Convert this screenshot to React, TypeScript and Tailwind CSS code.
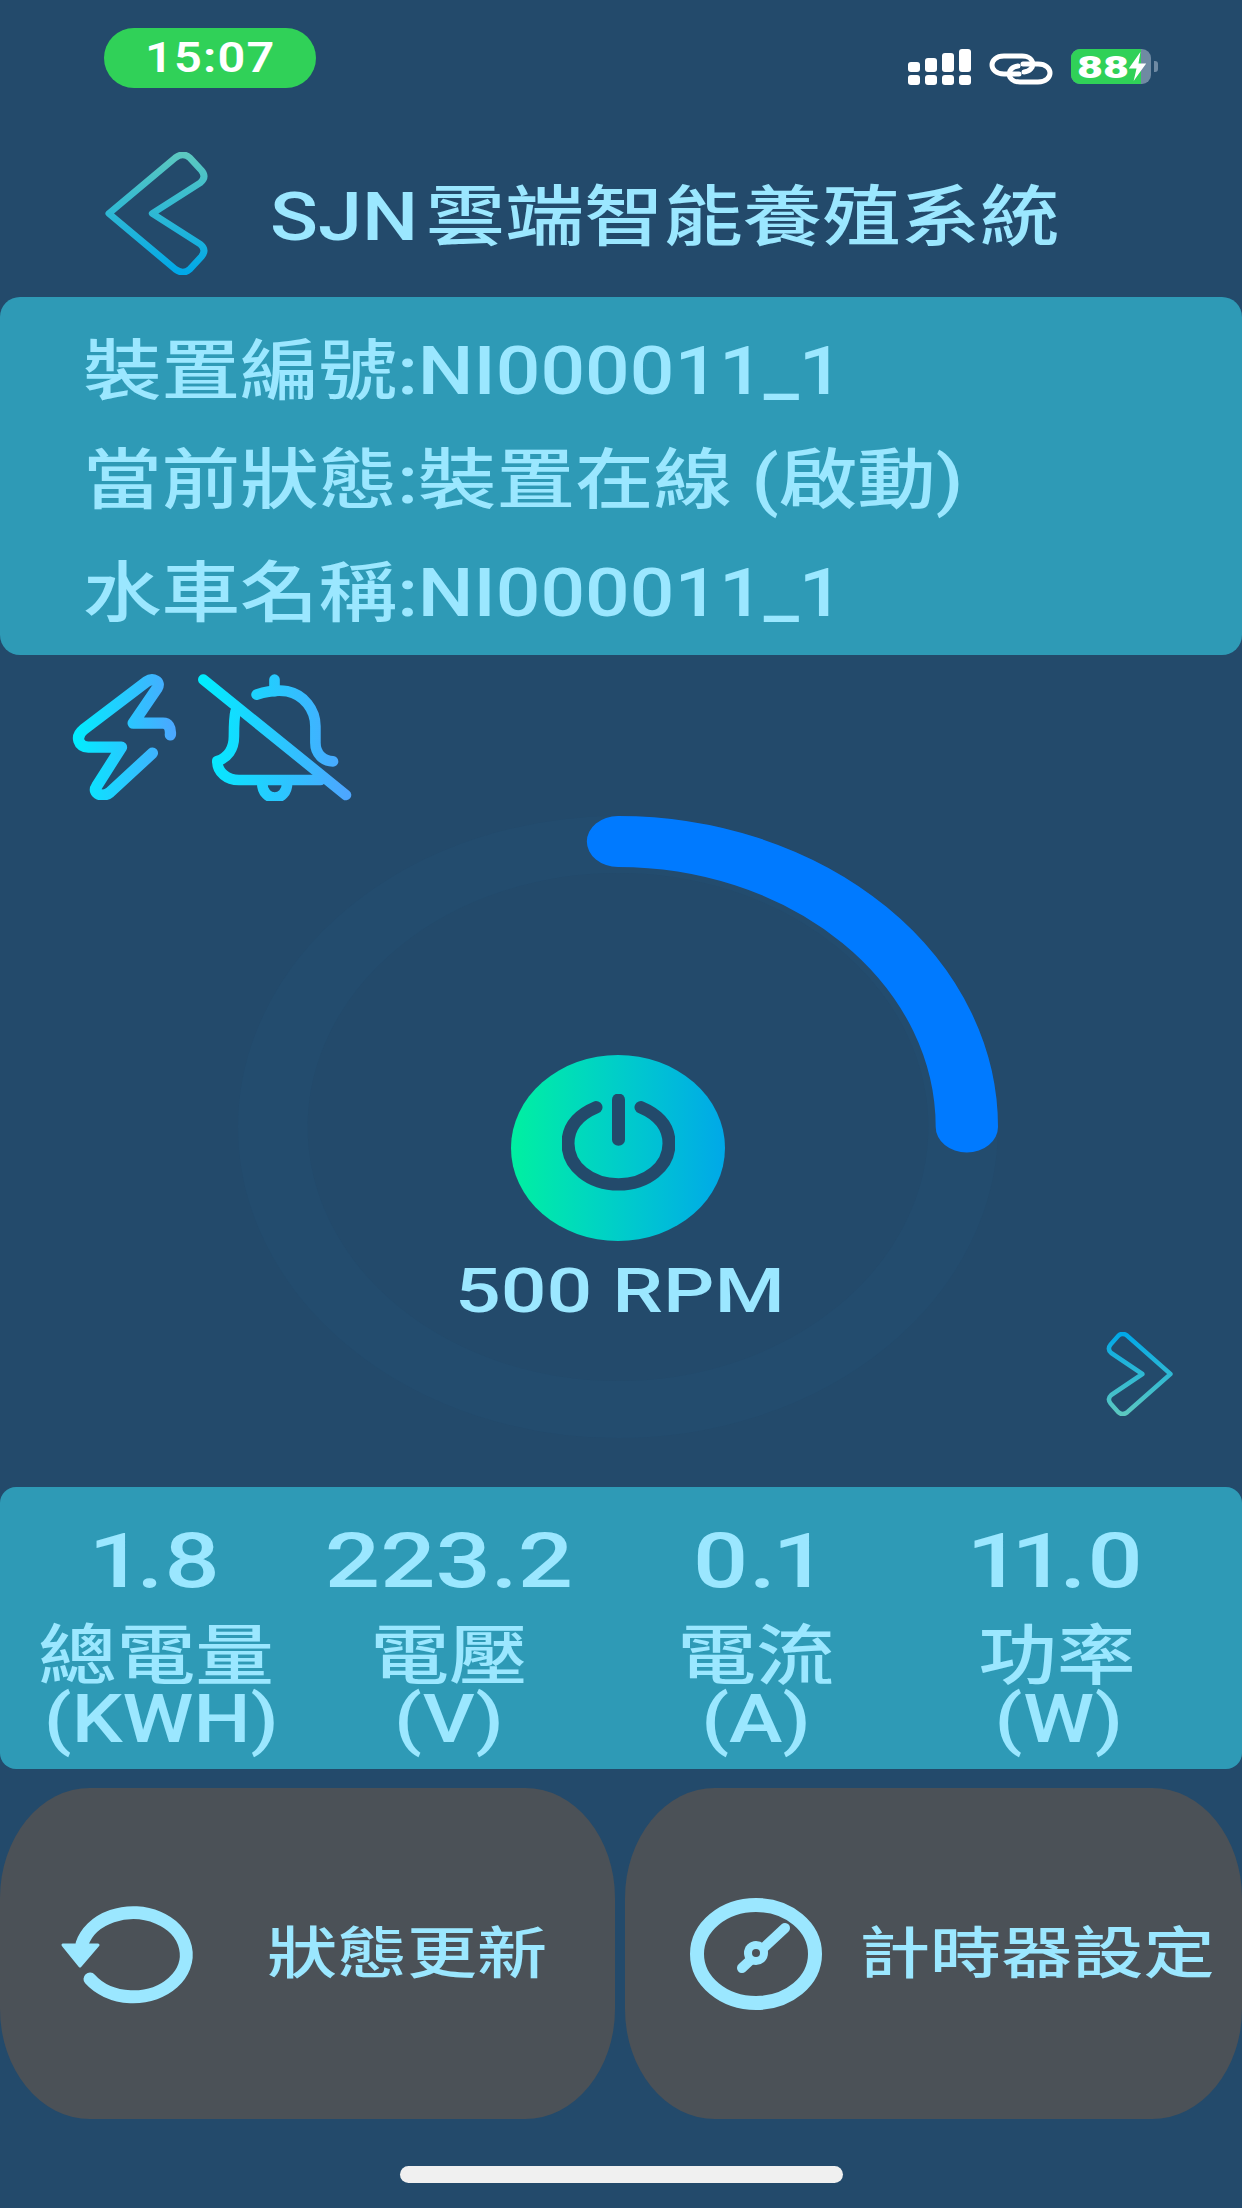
const font = 'font-["Roboto","Noto_Sans_CJK_TC",sans-serif]'

function BackChevron({ className }: { className: string }) {
  return (
    <svg viewBox="105 150 109 128" preserveAspectRatio="none" className={className} fill="none">
      <defs>
        <linearGradient id="chev" x1="0" y1="152" x2="0" y2="276" gradientUnits="userSpaceOnUse">
          <stop offset="0" stopColor="#5cc8c0" />
          <stop offset="1" stopColor="#00a8e8" />
        </linearGradient>
      </defs>
      <path
        d="M109 214 L178 156 Q186 150 193 156 L205 169 Q211 176 204 182 L154 214 L204 246 Q211 252 205 259 L193 272 Q186 278 178 272 Z"
        stroke="url(#chev)"
        strokeWidth="7"
        strokeLinejoin="round"
      />
    </svg>
  )
}

function SignalIcon() {
  const tops = ['h-[10px]', 'h-[14px]', 'h-[19px]', 'h-[23px]']
  return (
    <div className="flex gap-[5px] items-end">
      {tops.map((h) => (
        <div key={h} className="flex flex-col gap-[3px] items-center">
          <div className={`w-[12px] rounded-[3px] bg-white ${h}`} />
          <div className="w-[12px] h-[10px] rounded-[3px] bg-white" />
        </div>
      ))}
    </div>
  )
}

function LinkIcon() {
  return (
    <svg viewBox="0 0 64 32" className="w-[64px] h-[32px]" fill="none" stroke="#fff" strokeWidth="5" strokeLinecap="round">
      <path d="M30 21 H15 C-1 21 -1 3 15 3 H33 C47 3 47 18 35 19" />
      <path d="M34 11 H49 C65 11 65 29 49 29 H31 C17 29 17 14 29 13" />
    </svg>
  )
}

function Battery() {
  return (
    <div className="flex items-center">
      <div className="relative w-[80px] h-[35px] rounded-[9px] bg-[#6f8aa3] overflow-hidden">
        <div className="h-full w-[70px] bg-[#30d158] pl-[6px] flex items-center">
          <span className='text-white text-[32px] leading-none font-black font-["Roboto",sans-serif] origin-left scale-x-[1.4]'>88</span>
        </div>
        <svg viewBox="0 0 20 30" className="absolute right-[3px] top-[3px] w-[21px] h-[29px]" fill="#fff">
          <path d="M13 0 L1 17 H9 L6 30 L19 12 H11 Z" />
        </svg>
      </div>
      <div className="w-[4px] h-[11px] ml-[3px] rounded-r-[3px] bg-[#6f8aa3]" />
    </div>
  )
}

function BoltIcon() {
  return (
    <svg viewBox="210 100 340 380" className="w-[113px] h-[127px]" fill="none" strokeLinecap="round" strokeLinejoin="round">
      <defs>
        <linearGradient id="bolt" x1="220" y1="0" x2="530" y2="0" gradientUnits="userSpaceOnUse">
          <stop offset="0" stopColor="#00eeff" />
          <stop offset="1" stopColor="#4da6ff" />
        </linearGradient>
      </defs>
      <path
        d="M512 285 C514 262 505 250 490 250 L400 250 L472 145 C485 125 460 112 440 125 L250 270 C225 290 235 322 265 322 L365 322 L290 440 C275 462 310 475 330 458 L458 340"
        stroke="url(#bolt)"
        strokeWidth="34"
      />
    </svg>
  )
}

function BellOffIcon() {
  return (
    <svg viewBox="590 100 470 385" className="w-[157px] h-[128px]" fill="none" strokeLinecap="round" strokeLinejoin="round">
      <defs>
        <linearGradient id="bell" x1="600" y1="0" x2="1040" y2="0" gradientUnits="userSpaceOnUse">
          <stop offset="0" stopColor="#00eeff" />
          <stop offset="1" stopColor="#4da6ff" />
        </linearGradient>
      </defs>
      <g stroke="url(#bell)" strokeWidth="32">
        <path d="M608 120 L1037 467" />
        <path d="M822 120 V155" />
        <path d="M768 165 C800 155 830 150 860 155 C910 165 945 210 945 260 V310 C945 345 970 365 998 366" />
        <path d="M705 215 C700 235 700 260 700 290 C700 330 680 355 650 365 C650 400 680 422 715 422 L960 422" />
        <path d="M785 430 C785 490 860 490 860 430" />
      </g>
    </svg>
  )
}

function PowerIcon() {
  return (
    <svg viewBox="0 0 113 102" preserveAspectRatio="none" className="w-[113px] h-[97px] mb-[12px]" fill="none" stroke="#234a6b" strokeWidth="13" strokeLinecap="round">
      <path d="M56.500 6 V48" />
      <path d="M34 14 C16 22 6 35 6 52 C6 76 28 95 56.500 95 C85 95 107 76 107 52 C107 35 97 22 79 14" />
    </svg>
  )
}

function RefreshIcon() {
  return (
    <svg viewBox="55 1900 145 110" className="w-[145px] h-[110px]" fill="none">
      <path d="M82 1945 A53 42 0 1 1 90 1980" stroke="#9be7ff" strokeWidth="13" strokeLinecap="round" />
      <path d="M63 1946 H98 L80 1967 Z" fill="#9be7ff" stroke="#9be7ff" strokeWidth="3" strokeLinejoin="round" />
    </svg>
  )
}

function DialIcon() {
  return (
    <svg viewBox="685 1898 140 115" className="w-[140px] h-[115px]" fill="none">
      <ellipse cx="755" cy="1956" rx="59" ry="49" stroke="#9be7ff" strokeWidth="14" />
      <path d="M784 1930 L741 1970" stroke="#9be7ff" strokeWidth="10" strokeLinecap="round" />
      <ellipse cx="755" cy="1955" rx="12" ry="12" fill="#9be7ff" />
      <ellipse cx="755" cy="1955" rx="4" ry="4" fill="#4b5157" />
    </svg>
  )
}

const stats = [
  { value: '1.8', label: '總電量', unit: '(KWH)', unitClass: 'ml-[10px]' },
  { value: '223.2', label: '電壓', unit: '(V)', unitClass: '' },
  { value: '0.1', label: '電流', unit: '(A)', unitClass: '' },
  { value: '11.0', label: '功率', unit: '(W)', unitClass: 'ml-[3px]' },
]

export default function App() {
  return (
    <div className={`w-[1242px] h-[2208px] bg-[#234a6b] flex flex-col overflow-hidden text-[#9be7ff] ${font}`}>
      {/* Status bar */}
      <div className="h-[120px] flex justify-between pl-[104px] pr-[84px] pt-[28px]">
        <div className="w-[212px] h-[60px] rounded-[30px] bg-[#30d158] flex items-center justify-center">
          <span className="text-white text-[42px] leading-none font-semibold scale-x-[1.16] tracking-[1px]">15:07</span>
        </div>
        <div className="flex items-start gap-[18px] pt-[21px]">
          <SignalIcon />
          <div className="pt-[4px]"><LinkIcon /></div>
          <Battery />
        </div>
      </div>

      {/* Title */}
      <div className="h-[177px] flex items-center pl-[105px] pt-[10px]">
        <BackChevron className="w-[105px] h-[123px]" />
        <h1 className="ml-[60px] mt-[8px] text-[66px] leading-none font-medium [word-spacing:-10px] whitespace-nowrap origin-left scale-x-[1.2]">SJN 雲端智能養殖系統</h1>
      </div>

      {/* Device info */}
      <div className="h-[358px] rounded-[20px] bg-[#2e9ab6] pt-[20px] pl-[83px] text-[66px] font-medium">
        <p className="h-[109px] flex items-center whitespace-nowrap origin-left scale-x-[1.19]">裝置編號:NI000011_1</p>
        <p className="h-[109px] flex items-center whitespace-nowrap origin-left scale-x-[1.19]">當前狀態:裝置在線 (啟動)</p>
        <p className="h-[109px] mt-[4px] flex items-center whitespace-nowrap origin-left scale-x-[1.19]">水車名稱:NI000011_1</p>
      </div>

      {/* Alert icons */}
      <div className="h-[161px] flex items-start gap-[14px] pl-[70px] pt-[18px]">
        <BoltIcon />
        <BellOffIcon />
      </div>

      {/* Speed gauge */}
      <div className="h-[671px] relative flex justify-center pr-[6px]">
        <div className="relative w-[760px] h-[622px] flex flex-col items-center pt-[239px]">
          <svg viewBox="0 0 622 622" preserveAspectRatio="none" className="absolute inset-0 w-full h-full" fill="none">
            <circle cx="311" cy="311" r="282.500" stroke="#234c6e" strokeWidth="57" />
            <path d="M311 25.500 A285.500 285.500 0 0 1 596.500 311" stroke="#007aff" strokeWidth="51" strokeLinecap="round" />
          </svg>
          <div className="relative w-[214px] h-[186px] rounded-[50%] bg-gradient-to-r from-[#00f0a0] to-[#00a8e8] flex items-center justify-center">
            <PowerIcon />
          </div>
          <span className="relative mt-[14px] ml-[4px] text-[62px] leading-[72px] font-medium scale-x-[1.3] whitespace-nowrap">500 RPM</span>
        </div>
        <BackChevron className="absolute left-[1105px] top-[516px] w-[68px] h-[84px] rotate-180" />
      </div>

      {/* Readings */}
      <div className="h-[282px] rounded-[16px] bg-[#2e9ab6] grid grid-cols-[312px_274px_340px_262px] pt-[28px] text-center font-medium">
        {stats.map((s) => (
          <div key={s.label} className="flex flex-col items-center whitespace-nowrap">
            <span className="text-[76px] h-[92px] leading-[92px] proportional-nums scale-x-[1.28]">{s.value}</span>
            <span className="text-[66px] h-[64px] mt-[18px] leading-[64px] scale-x-[1.19]">{s.label}</span>
            <span className={`text-[66px] h-[62px] leading-[62px] scale-x-[1.22] ${s.unitClass}`}>{s.unit}</span>
          </div>
        ))}
      </div>

      {/* Actions */}
      <div className="mt-[19px] h-[331px] flex gap-[10px] text-[56px] font-medium">
        <div className="w-[615px] rounded-[90px/110px] bg-[#4b5157] flex items-center pl-[55px]">
          <RefreshIcon />
          <span className="ml-[67px] whitespace-nowrap origin-left scale-x-[1.25]">狀態更新</span>
        </div>
        <div className="w-[617px] rounded-[90px/110px] bg-[#4b5157] flex items-center pl-[61px]">
          <DialIcon />
          <span className="ml-[33px] whitespace-nowrap origin-left scale-x-[1.27]">計時器設定</span>
        </div>
      </div>

      {/* Home indicator */}
      <div className="pt-[47px] flex justify-center">
        <div className="w-[443px] h-[17px] rounded-full bg-[#f0f0f0]" />
      </div>
    </div>
  )
}
